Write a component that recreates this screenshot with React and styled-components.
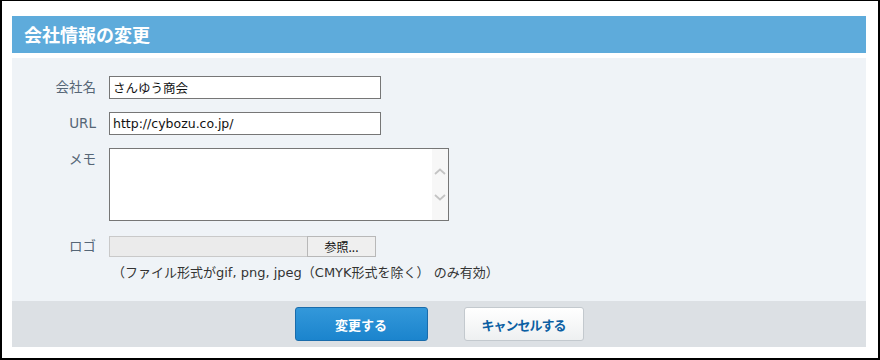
import styled, { createGlobalStyle } from 'styled-components';

const GlobalStyle = createGlobalStyle`
  html, body {
    margin: 0;
    padding: 0;
    background: #fff;
  }
  body {
    font-family: "DejaVu Sans", "Noto Sans CJK JP", sans-serif;
  }
`;

const Frame = styled.div`
  box-sizing: border-box;
  width: 880px;
  height: 360px;
  border: 2px solid #000;
  border-top-width: 1px;
  padding: 15px 12px 11px 10px;
  display: flex;
  flex-direction: column;
  background: #fff;
`;

const Header = styled.h1`
  margin: 0;
  height: 37px;
  background: #5eabdb;
  color: #fff;
  font-family: "Noto Sans CJK JP", sans-serif;
  font-size: 18px;
  font-weight: 700;
  line-height: 37px;
  padding-left: 12px;
`;

const Body = styled.div`
  margin-top: 5px;
  background: #eff3f7;
  padding: 18px 0 0;
  flex: 1;
  display: grid;
  grid-template-columns: 84px 1fr;
  column-gap: 13px;
  align-content: start;
`;

const Label = styled.div`
  text-align: right;
  color: #566676;
  font-size: 13.5px;
  line-height: ${(p) => p.$h || 23}px;
  height: ${(p) => p.$h || 23}px;
  margin-bottom: ${(p) => p.$mb ?? 13}px;
`;

const Field = styled.div`
  margin-bottom: ${(p) => p.$mb ?? 13}px;
`;

const TextInput = styled.input`
  box-sizing: border-box;
  width: 272px;
  height: 23px;
  border: 1px solid #767676;
  padding: 0 3px;
  font-family: "DejaVu Sans", "Noto Sans CJK JP", sans-serif;
  font-size: 12.5px;
  color: #111;
  background: #fff;
  outline: none;
`;

const MemoBox = styled.div`
  box-sizing: border-box;
  width: 340px;
  height: 73px;
  border: 1px solid #767676;
  background: #fff;
  display: flex;
`;

const Memo = styled.textarea`
  flex: 1;
  border: none;
  resize: none;
  outline: none;
  padding: 2px 3px;
  background: #fff;
`;

const Track = styled.div`
  width: 16px;
  background: #f7f7f7;
  display: flex;
  flex-direction: column;
  justify-content: center;
  align-items: center;
  gap: 19px;
`;

const FileRow = styled.div`
  display: flex;
  height: 21px;
`;

const FileName = styled.div`
  box-sizing: border-box;
  width: 198px;
  height: 21px;
  background: #ebebeb;
  border: 1px solid #c9c9c9;
  border-right: none;
`;

const Browse = styled.button`
  box-sizing: border-box;
  width: 69px;
  height: 21px;
  background: #efefef;
  border: 1px solid #b8b8b8;
  font-family: "Noto Sans CJK JP", sans-serif;
  font-size: 12px;
  color: #111;
  padding: 0;
  line-height: 19px;
`;

const Note = styled.div`
  margin-top: 5px;
  padding-left: 3px;
  font-size: 13px;
  color: #333;
`;

const Footer = styled.div`
  height: 46px;
  background: #dce0e4;
  display: flex;
  justify-content: center;
  align-items: center;
  gap: 36px;
`;

const Button = styled.button`
  box-sizing: border-box;
  height: 34px;
  width: ${(p) => p.$w}px;
  border-radius: 3px;
  font-family: "Noto Sans CJK JP", sans-serif;
  font-size: 13px;
  font-weight: 700;
  letter-spacing: ${(p) => (p.$primary ? 0 : -1)}px;
  cursor: pointer;
  border: 1px solid ${(p) => (p.$primary ? '#1a6cab' : '#c3c9ce')};
  color: ${(p) => (p.$primary ? '#fff' : '#0b5fa3')};
  background: ${(p) =>
    p.$primary
      ? 'linear-gradient(#3398da, #1b84cd)'
      : 'linear-gradient(#ffffff, #eef0f1)'};
`;

const Chevron = ({ up }) => (
  <svg width="12" height="7" viewBox="0 0 12 7">
    <path
      d={up ? 'M1 6 L6 1.5 L11 6' : 'M1 1 L6 5.5 L11 1'}
      fill="none"
      stroke="#c4c4c4"
      strokeWidth="1.8"
    />
  </svg>
);

export default function App() {
  return (
    <Frame>
      <GlobalStyle />
      <Header>会社情報の変更</Header>
      <Body>
        <Label>会社名</Label>
        <Field>
          <TextInput defaultValue="さんゆう商会" />
        </Field>
        <Label>URL</Label>
        <Field>
          <TextInput defaultValue="http://cybozu.co.jp/" />
        </Field>
        <Label $h={23} $mb={65}>メモ</Label>
        <Field $mb={15}>
          <MemoBox>
            <Memo />
            <Track>
              <Chevron up />
              <Chevron />
            </Track>
          </MemoBox>
        </Field>
        <Label $h={21} $mb={0}>ロゴ</Label>
        <Field $mb={0}>
          <FileRow>
            <FileName />
            <Browse>参照...</Browse>
          </FileRow>
          <Note>（ファイル形式がgif, png, jpeg（CMYK形式を除く） のみ有効）</Note>
        </Field>
      </Body>
      <Footer>
        <Button $primary $w={133}>変更する</Button>
        <Button $w={120}>キャンセルする</Button>
      </Footer>
    </Frame>
  );
}
